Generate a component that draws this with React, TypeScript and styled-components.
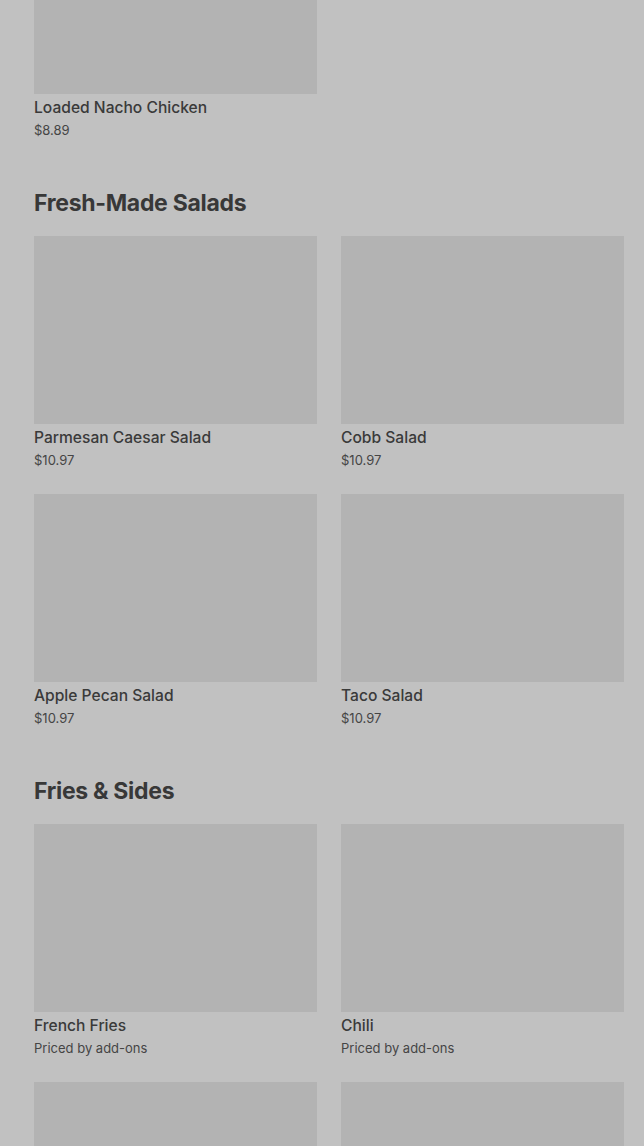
import React, { FC } from "react";
import styled, { createGlobalStyle } from "styled-components";

const GlobalStyle = createGlobalStyle`
  html, body {
    margin: 0;
    padding: 0;
    background: #c1c1c1;
    overflow: hidden;
  }
  body {
    font-family: Inter, "Noto Sans", "Liberation Sans", sans-serif;
    color: #383838;
  }
`;

// page keeps a little more room on the left than on the right
const Page = styled.div`
  padding: 0 20px 0 34px;
  margin-top: -94px;
  display: flex;
  flex-direction: column;
  gap: 48px;
`;

const Section = styled.section`
  display: flex;
  flex-direction: column;
  gap: 17px;
`;

const SectionTitle = styled.h2`
  margin: 0;
  font-size: 23px;
  line-height: 32px;
  font-weight: 700;
  letter-spacing: -0.3px;
  color: #383838;
`;

const Grid = styled.div`
  display: grid;
  grid-template-columns: 1fr 1fr;
  column-gap: 24px;
  row-gap: 25px;
`;

const Card = styled.div`
  display: flex;
  flex-direction: column;
  min-width: 0;
`;

const Thumb = styled.div`
  height: 188px;
  background: #b3b3b3;
`;

const ItemName = styled.div`
  margin-top: 4px;
  font-size: 15.6px;
  line-height: 20px;
  font-weight: 500;
  color: #3a3a3a;
`;

const ItemPrice = styled.div`
  margin-top: 3px;
  font-size: 13px;
  line-height: 18px;
  color: #454545;
`;

type Item = { name?: string; price?: string };

const previous: Item[] = [{ name: "Loaded Nacho Chicken", price: "$8.89" }];

// the last row of sides is still below the fold, only its pictures show
const sections: { title: string; items: Item[] }[] = [
  {
    title: "Fresh-Made Salads",
    items: [
      { name: "Parmesan Caesar Salad", price: "$10.97" },
      { name: "Cobb Salad", price: "$10.97" },
      { name: "Apple Pecan Salad", price: "$10.97" },
      { name: "Taco Salad", price: "$10.97" },
    ],
  },
  {
    title: "Fries & Sides",
    items: [
      { name: "French Fries", price: "Priced by add-ons" },
      { name: "Chili", price: "Priced by add-ons" },
      {},
      {},
    ],
  },
];

const MenuCard: FC<Item> = ({ name, price }) => (
  <Card>
    <Thumb />
    {name && <ItemName>{name}</ItemName>}
    {price && <ItemPrice>{price}</ItemPrice>}
  </Card>
);

const App: FC = () => (
  <>
    <GlobalStyle />
    <Page>
      <Grid>
        {previous.map((it, i) => (
          <MenuCard key={i} {...it} />
        ))}
      </Grid>
      {sections.map((s) => (
        <Section key={s.title}>
          <SectionTitle>{s.title}</SectionTitle>
          <Grid>
            {s.items.map((it, i) => (
              <MenuCard key={i} {...it} />
            ))}
          </Grid>
        </Section>
      ))}
    </Page>
  </>
);

export default App;
